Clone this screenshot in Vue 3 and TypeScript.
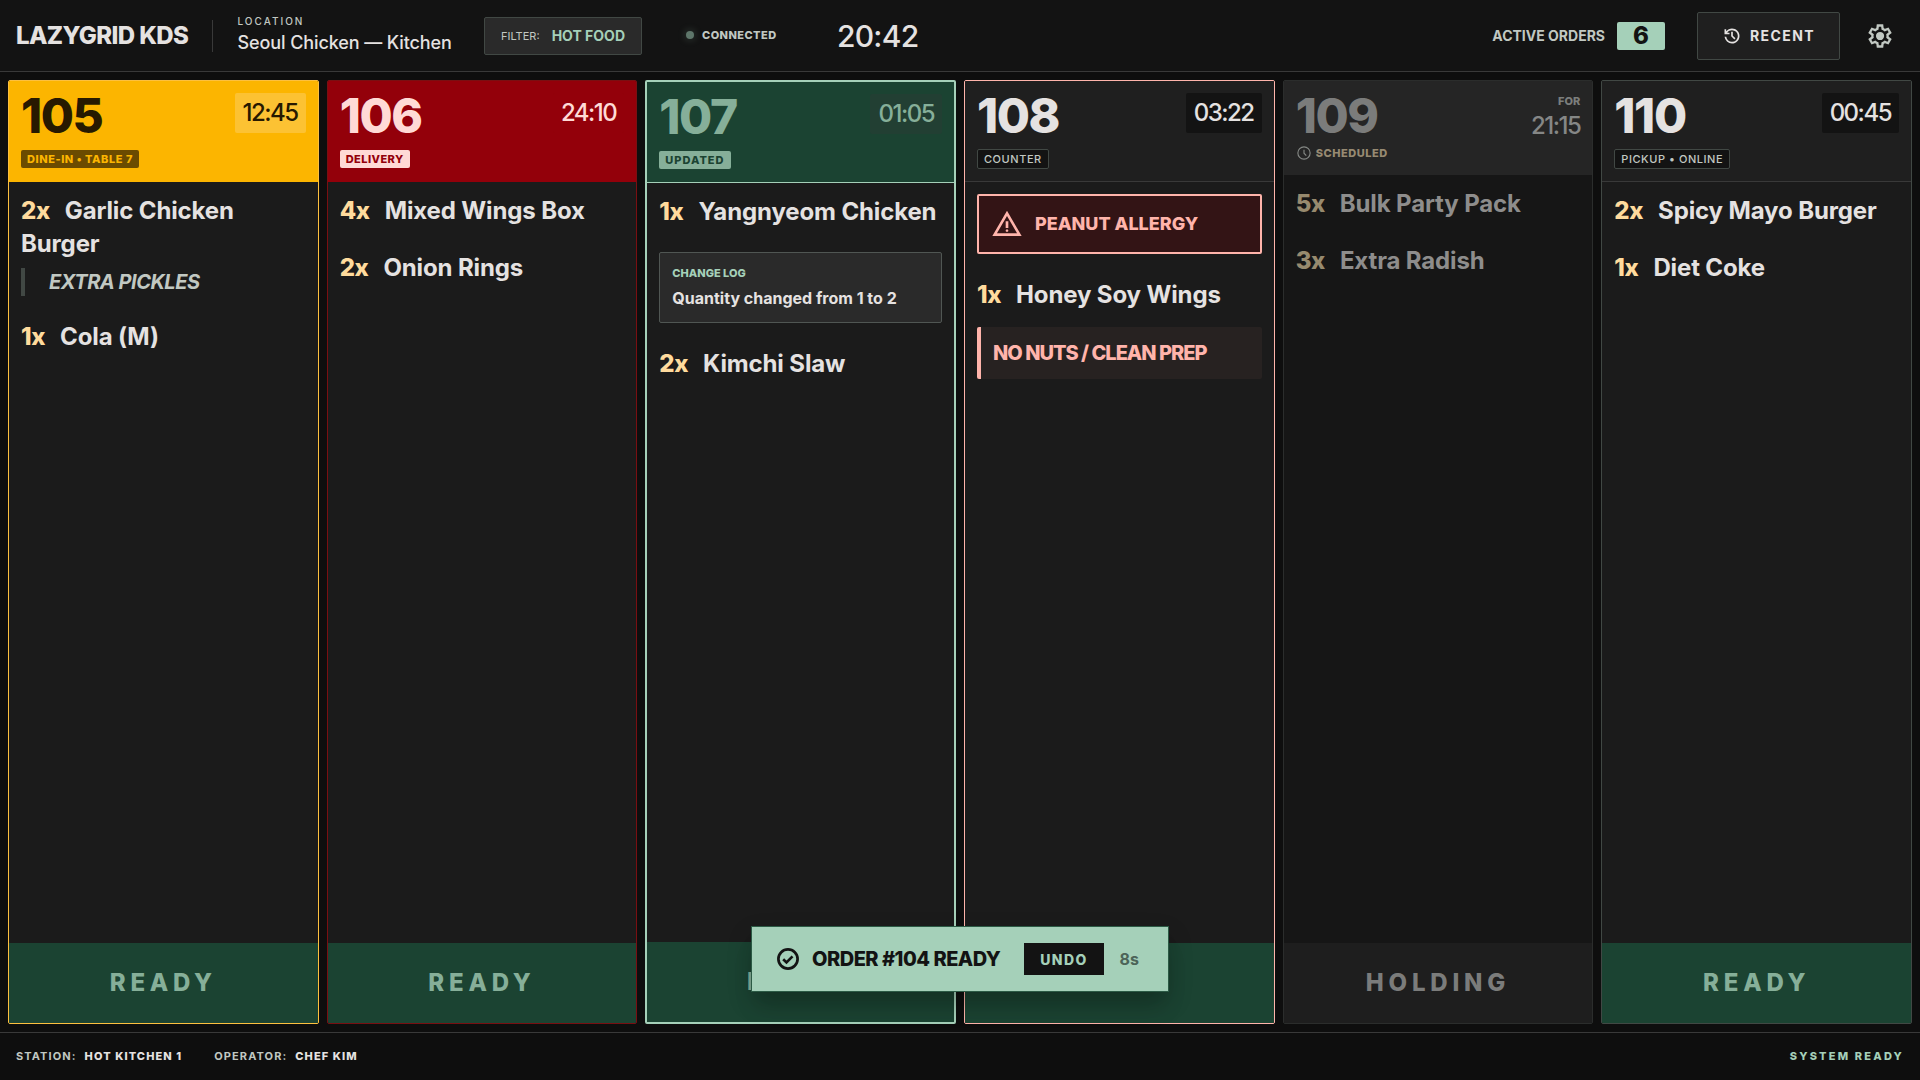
<script setup lang="ts">
interface OrderLine {
  kind: 'item' | 'note' | 'log' | 'alert' | 'warn'
  qty?: string
  text: string
  label?: string
}

interface Order {
  id: string
  tone: 'amber' | 'red' | 'green' | 'alert' | 'held' | 'plain'
  tag: string
  time: string
  action: string
  lines: OrderLine[]
}

const orders: Order[] = [
  {
    id: '105', tone: 'amber', tag: 'DINE-IN • TABLE 7', time: '12:45', action: 'READY',
    lines: [
      { kind: 'item', qty: '2x', text: 'Garlic Chicken Burger' },
      { kind: 'note', text: 'EXTRA PICKLES' },
      { kind: 'item', qty: '1x', text: 'Cola (M)' },
    ],
  },
  {
    id: '106', tone: 'red', tag: 'DELIVERY', time: '24:10', action: 'READY',
    lines: [
      { kind: 'item', qty: '4x', text: 'Mixed Wings Box' },
      { kind: 'item', qty: '2x', text: 'Onion Rings' },
    ],
  },
  {
    id: '107', tone: 'green', tag: 'UPDATED', time: '01:05', action: 'READY',
    lines: [
      { kind: 'item', qty: '1x', text: 'Yangnyeom Chicken' },
      { kind: 'log', label: 'CHANGE LOG', text: 'Quantity changed from 1 to 2' },
      { kind: 'item', qty: '2x', text: 'Kimchi Slaw' },
    ],
  },
  {
    id: '108', tone: 'alert', tag: 'COUNTER', time: '03:22', action: 'READY',
    lines: [
      { kind: 'alert', text: 'PEANUT ALLERGY' },
      { kind: 'item', qty: '1x', text: 'Honey Soy Wings' },
      { kind: 'warn', text: 'NO NUTS / CLEAN PREP' },
    ],
  },
  {
    id: '109', tone: 'held', tag: 'SCHEDULED', time: '21:15', action: 'HOLDING',
    lines: [
      { kind: 'item', qty: '5x', text: 'Bulk Party Pack' },
      { kind: 'item', qty: '3x', text: 'Extra Radish' },
    ],
  },
  {
    id: '110', tone: 'plain', tag: 'PICKUP • ONLINE', time: '00:45', action: 'READY',
    lines: [
      { kind: 'item', qty: '2x', text: 'Spicy Mayo Burger' },
      { kind: 'item', qty: '1x', text: 'Diet Coke' },
    ],
  },
]
</script>

<template>
  <div class="screen">
    <header class="topbar">
      <div class="brand">LAZYGRID KDS</div>
      <div class="location">
        <span class="location-label">LOCATION</span>
        <span class="location-name">Seoul Chicken — Kitchen</span>
      </div>
      <div class="filter">
        <span class="filter-label">FILTER:</span>
        <span class="filter-value">HOT FOOD</span>
      </div>
      <div class="status"><i class="dot"></i><span>CONNECTED</span></div>
      <div class="clock">20:42</div>
      <div class="spacer"></div>
      <div class="active"><span class="active-label">ACTIVE ORDERS</span><span class="count">6</span></div>
      <button class="recent">
        <svg width="20" height="20" viewBox="0 -960 960 960"><path d="M480-120q-138 0-240.5-91.5T122-440h82q14 104 92.500 172T480-200q117 0 198.500-81.500T760-480q0-117-81.500-198.500T480-760q-69 0-129 32t-101 88h110v80H120v-240h80v94q51-64 124.500-99T480-840q75 0 140.500 28.500t114 77q48.500 48.500 77 114T840-480q0 75-28.500 140.500t-77 114q-48.500 48.500-114 77T480-120Zm112-192L440-464v-216h80v184l128 128-56 56Z" /></svg>
        <span>RECENT</span>
      </button>
      <button class="gear">
        <svg width="28" height="28" viewBox="0 -960 960 960"><path d="m370-80-16-128q-13-5-24.500-12T307-235l-119 50L78-375l103-78q-1-7-1-13.500v-27q0-6.500 1-13.500L78-585l110-190 119 50q11-8 23-15t24-12l16-128h220l16 128q13 5 24.500 12t22.500 15l119-50 110 190-103 78q1 7 1 13.500v27q0 6.500-2 13.500l103 78-110 190-118-50q-11 8-23 15t-24 12L590-80H370Zm70-80h79l14-106q31-8 57.500-23.500T639-327l99 41 39-68-86-65q5-14 7-29.500t2-31.500q0-16-2-31.500t-7-29.500l86-65-39-68-99 42q-22-23-48.500-38.500T533-694l-13-106h-79l-14 106q-31 8-57.500 23.500T321-633l-99-41-39 68 86 64q-5 15-7 30t-2 32q0 16 2 31t7 30l-86 65 39 68 99-42q22 23 48.500 38.500T427-266l13 106Zm42-180q58 0 99-41t41-99q0-58-41-99t-99-41q-59 0-99.500 41T342-480q0 58 40.500 99t99.500 41Z" /></svg>
      </button>
    </header>

    <main class="board">
      <article v-for="o in orders" :key="o.id" class="card" :class="o.tone">
        <div class="card-head">
          <div>
            <div class="number">{{ o.id }}</div>
            <div class="tag-row">
              <svg v-if="o.tone === 'held'" class="tag-icon" width="16" height="16" viewBox="0 0 24 24"><circle cx="12" cy="12" r="9.200" /><path d="M12 7v5.300l3.400 3.600" /></svg>
              <span class="tag">{{ o.tag }}</span>
            </div>
          </div>
          <div class="when">
            <span v-if="o.tone === 'held'" class="for">FOR</span>
            <span class="timer">{{ o.time }}</span>
          </div>
        </div>
        <div class="card-body">
          <template v-for="(l, i) in o.lines" :key="i">
            <div v-if="l.kind === 'item'" class="item"><span class="qty">{{ l.qty }}</span>{{ l.text }}</div>
            <div v-else-if="l.kind === 'note'" class="note">{{ l.text }}</div>
            <div v-else-if="l.kind === 'log'" class="log">
              <div class="log-label">{{ l.label }}</div>
              <div class="log-text">{{ l.text }}</div>
            </div>
            <div v-else-if="l.kind === 'alert'" class="allergy">
              <svg width="32" height="32" viewBox="0 -960 960 960"><path d="m40-120 440-760 440 760H40Zm138-80h604L480-720 178-200Zm302-40q17 0 28.500-11.500T520-280q0-17-11.500-28.500T480-320q-17 0-28.500 11.500T440-280q0 17 11.500 28.500T480-240Zm-40-120h80v-200h-80v200Z" /></svg>
              <span>{{ l.text }}</span>
            </div>
            <div v-else class="warn">{{ l.text }}</div>
          </template>
        </div>
        <button class="action">{{ o.action }}</button>
      </article>
    </main>

    <footer class="bottombar">
      <div class="meta"><span>STATION:</span><b>HOT KITCHEN 1</b></div>
      <div class="meta"><span>OPERATOR:</span><b>CHEF KIM</b></div>
      <div class="spacer"></div>
      <div class="system">SYSTEM READY</div>
    </footer>

    <div class="toast">
      <svg width="24" height="24" viewBox="0 0 24 24"><circle cx="12" cy="12" r="9.600" /><path d="M7.200 12.200l3.300 3.200 6-6" /></svg>
      <span class="toast-text">ORDER #104 READY</span>
      <button class="undo">UNDO</button>
      <span class="count-down">8s</span>
    </div>
  </div>
</template>

<style>
body {
  background: #0e0e0e;
}
</style>

<style scoped>
.screen {
  position: relative;
  display: flex;
  flex-direction: column;
  width: 1920px;
  height: 1080px;
  overflow: hidden;
  background: #0e0e0e;
  color: #e5e2e1;
  font-family: Inter, 'Liberation Sans', sans-serif;
}
.screen * {
  box-sizing: border-box;
}
button {
  margin: 0;
  padding: 0;
  border: 0;
  background: none;
  font-family: inherit;
}
.spacer {
  flex: 1;
}
.topbar {
  display: flex;
  align-items: center;
  flex: none;
  height: 72px;
  padding: 0 16px;
  background: #131313;
  border-bottom: 1px solid #393939;
  white-space: nowrap;
}
.brand {
  width: 172px;
  font-size: 24px;
  font-weight: 800;
  line-height: 32px;
  letter-spacing: -0.600px;
}
.location {
  display: flex;
  flex-direction: column;
  justify-content: center;
  height: 32px;
  margin-left: 24px;
  padding-left: 24.500px;
  width: 240px;
  border-left: 1px solid #393939;
}
.location-label {
  font-size: 10px;
  font-weight: 500;
  line-height: 15px;
  letter-spacing: 2px;
  color: #c1c8c2;
}
.location-name {
  font-size: 18px;
  font-weight: 500;
  line-height: 28px;
  letter-spacing: -0.100px;
}
.filter {
  display: flex;
  align-items: center;
  justify-content: space-between;
  width: 158px;
  height: 38px;
  margin-left: 32px;
  padding: 0 16px;
  background: #2a2a2a;
  border: 1px solid #414844;
  border-radius: 2px;
}
.filter-label {
  font-size: 11px;
  color: #c1c8c2;
}
.filter-value {
  font-size: 14px;
  font-weight: 700;
  color: #a5d0b9;
}
.status {
  display: flex;
  align-items: center;
  gap: 8px;
  width: 92px;
  margin-left: 44px;
  padding-bottom: 1px;
  font-size: 11px;
  font-weight: 800;
  letter-spacing: 0.450px;
  color: #c1c8c2;
}
.dot {
  width: 8px;
  height: 8px;
  border-radius: 50%;
  background: #5e766a;
  box-shadow: 0 0 8px rgba(165, 208, 185, 0.3);
}
.clock {
  margin-left: 59px;
  padding-top: 1px;
  font-size: 30px;
  font-weight: 500;
  line-height: 38px;
  letter-spacing: -0.750px;
}
.active {
  display: flex;
  align-items: center;
  gap: 12px;
}
.active-label {
  font-size: 14px;
  font-weight: 700;
  color: #c1c8c2;
}
.count {
  width: 48px;
  height: 28px;
  border-radius: 2px;
  background: #a5d0b9;
  color: #131313;
  font-size: 24px;
  font-weight: 800;
  line-height: 27px;
  text-align: center;
}
.recent {
  display: flex;
  align-items: center;
  justify-content: center;
  gap: 8px;
  width: 143px;
  height: 48px;
  margin-left: 32px;
  background: #1f1f1f;
  border: 1px solid #414844;
  border-radius: 2px;
  color: #e5e2e1;
  font-size: 14px;
  font-weight: 700;
  letter-spacing: 1.400px;
}
.recent svg,
.gear svg {
  fill: currentColor;
}
.gear {
  display: flex;
  align-items: center;
  justify-content: center;
  width: 48px;
  height: 48px;
  margin-left: 16px;
  color: #c1c8c2;
}

.board {
  display: grid;
  grid-template-columns: repeat(6, minmax(0, 1fr));
  gap: 8px;
  flex: 1;
  min-height: 0;
  padding: 8px;
}
.card {
  display: flex;
  flex-direction: column;
  min-width: 0;
  background: #1b1b1b;
  border: 1px solid #393939;
  border-radius: 2px;
  overflow: hidden;
}
.card-head {
  display: flex;
  justify-content: space-between;
  flex: none;
  height: 101px;
  padding: 12px;
  background: #1f1f1f;
  border-bottom: 1px solid #393939;
}
.number {
  height: 48px;
  font-size: 48px;
  font-weight: 800;
  line-height: 46px;
  letter-spacing: -1.400px;
}
.tag-row {
  display: flex;
  align-items: center;
  height: 20px;
  margin-top: 8px;
}
.tag {
  padding: 1.500px 6px;
  border-radius: 2px;
  font-size: 11px;
  font-weight: 800;
  line-height: 15px;
  letter-spacing: 0.550px;
  white-space: nowrap;
}
.when {
  display: flex;
  flex-direction: column;
  align-items: flex-end;
}
.timer {
  padding: 4px 8px;
  border-radius: 2px;
  background: #131313;
  font-size: 24px;
  font-weight: 500;
  line-height: 32px;
  letter-spacing: -1.500px;
}
.card-body {
  flex: 1;
  padding: 12px;
}
.item {
  font-size: 24px;
  font-weight: 700;
  line-height: 33px;
  letter-spacing: -0.130px;
}
.card-body > * + * {
  margin-top: 24px;
}
.qty {
  margin-right: 15px;
  color: #ffdb9d;
  font-weight: 800;
  letter-spacing: -0.400px;
}
.card-body > .note {
  margin-top: 8px;
  padding-left: 24px;
  border-left: 4px solid #414844;
  color: #c1c8c2;
  font-size: 20px;
  font-style: italic;
  font-weight: 700;
  line-height: 28px;
  letter-spacing: -0.480px;
}
.log {
  height: 71px;
  padding: 12px;
  background: #2a2a2a;
  border: 1px solid #505653;
  border-radius: 2px;
}
.log-label {
  margin-bottom: 5px;
  color: #a5d0b9;
  font-size: 11px;
  font-weight: 800;
  line-height: 16px;
}
.log-text {
  font-size: 16px;
  font-weight: 700;
  line-height: 24px;
}
.allergy {
  display: flex;
  align-items: center;
  gap: 12px;
  padding: 12px;
  border: 2px solid #ffb4ab;
  border-radius: 2px;
  background: #331415;
  color: #ffb4ab;
  font-size: 18px;
  font-weight: 800;
}
.allergy span {
  padding-bottom: 2px;
}
.allergy svg {
  fill: currentColor;
}
.card-body > .warn {
  margin-top: 16px;
  padding: 12px;
  border-left: 4px solid #ffb4ab;
  border-radius: 2px;
  background: #272221;
  color: #ffb4ab;
  font-size: 20px;
  font-weight: 800;
  line-height: 28px;
  letter-spacing: -1px;
}
.action {
  flex: none;
  height: 80px;
  padding-bottom: 2px;
  background: #1b4332;
  color: #86af99;
  font-size: 24px;
  font-weight: 800;
  letter-spacing: 4.800px;
}

.amber {
  border-color: #fdc03f;
}
.amber .card-head {
  background: #fcb500;
  border-color: #fcb500;
  color: #271900;
}
.amber .tag {
  background: #6b4b00;
  color: #fcb500;
}
.amber .timer {
  background: #fcc233;
}
.red {
  border-color: #7a0f12;
}
.red .card-head {
  background: #93000a;
  border-color: #93000a;
  color: #ffdad6;
}
.red .tag {
  background: #ffdad6;
  color: #93000a;
  letter-spacing: 0.450px;
}
.red .timer {
  background: #93000a;
}
.green {
  border: 2px solid #a5d0b9;
}
.green .card-head {
  background: #1b4332;
  border-color: #a5d0b9;
  color: #86af99;
}
.green .tag {
  background: #86af99;
  color: #1b4332;
  letter-spacing: 1px;
}
.green .timer {
  background: #223f33;
}
.alert {
  border-color: #ffb4ab;
}
.alert .tag,
.plain .tag {
  border: 1px solid #414844;
  background: #131313;
  color: #c1c8c2;
  font-weight: 500;
}
.plain {
  border-color: #414844;
}
.held {
  border-color: #2b2d2c;
  background: #161616;
}
.held .card-head {
  height: 94px;
  background: #252525;
  border-bottom: 0;
  color: #7b7c7b;
}
.held .tag-row {
  gap: 4px;
  height: 16px;
  margin-top: 4px;
}
.held .tag {
  padding: 0;
  color: #978a72;
}
.tag-icon {
  fill: none;
  stroke: #858885;
  stroke-width: 1.700;
}
.for {
  height: 17px;
  color: #7b7e7c;
  font-size: 11px;
  font-weight: 800;
  line-height: 16px;
}
.held .timer {
  padding: 3px 0 0;
  line-height: 26px;
  background: none;
  color: #858786;
}
.held .item {
  color: #8e8d8c;
}
.held .qty {
  color: #978a6e;
}
.held .action {
  background: #1e1e1e;
  color: #7b7c7b;
}

.bottombar {
  display: flex;
  align-items: center;
  flex: none;
  height: 48px;
  padding: 0 16px 2px;
  border-top: 1px solid #393939;
  font-size: 11px;
  font-weight: 700;
  letter-spacing: 1.100px;
}
.meta {
  display: flex;
  gap: 8px;
  margin-right: 32px;
  color: #c1c8c2;
}
.meta b {
  color: #e5e2e1;
  font-weight: 800;
}
.system {
  color: #a5d0b9;
  font-weight: 800;
  letter-spacing: 2.200px;
}

.toast {
  position: absolute;
  left: 751px;
  top: 926px;
  display: flex;
  align-items: center;
  width: 418px;
  height: 66px;
  padding: 0 24px;
  background: #a5d0b9;
  border: 1px solid #2c5a45;
  box-shadow: 0 20px 25px -5px rgba(0, 0, 0, 0.1), 0 10px 24px rgba(0, 0, 0, 0.2);
  color: #131313;
  white-space: nowrap;
}
.toast svg {
  fill: none;
  stroke: currentColor;
  stroke-width: 2.700;
}
.toast-text {
  width: 188px;
  margin-left: 12px;
  font-size: 20px;
  font-weight: 800;
  letter-spacing: -0.500px;
}
.undo {
  width: 80px;
  height: 32px;
  margin-left: 24px;
  background: #131313;
  color: #a5d0b9;
  font-size: 14px;
  font-weight: 800;
  letter-spacing: 1.400px;
}
.count-down {
  margin-left: 15.500px;
  color: #4c6458;
  font-size: 16px;
  font-weight: 700;
}
</style>
